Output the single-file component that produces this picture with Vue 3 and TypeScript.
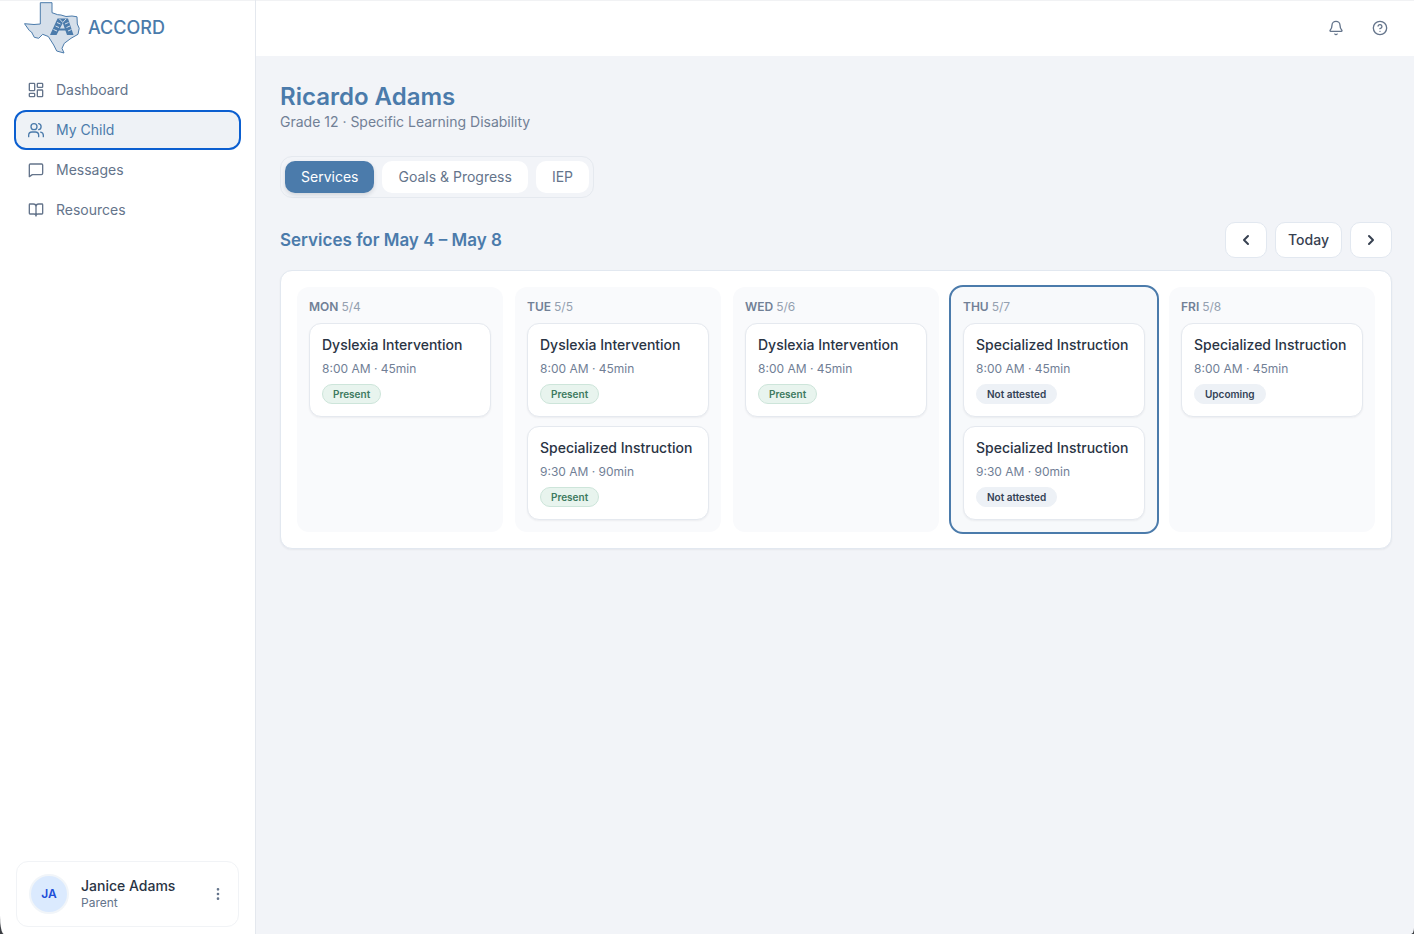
<script setup lang="ts">
import { ref } from 'vue'

interface Session {
  name: string
  time: string
  status: 'Present' | 'Not attested' | 'Upcoming'
}

interface Day {
  label: string
  date: string
  today?: boolean
  sessions: Session[]
}

const navItems = [
  { id: 'dashboard', label: 'Dashboard' },
  { id: 'child', label: 'My Child' },
  { id: 'messages', label: 'Messages' },
  { id: 'resources', label: 'Resources' },
]
const activeNav = ref('child')

const tabs = ['Services', 'Goals & Progress', 'IEP']
const activeTab = ref('Services')

const early = '8:00 AM · 45min'
const late = '9:30 AM · 90min'

const days: Day[] = [
  { label: 'MON', date: '5/4', sessions: [{ name: 'Dyslexia Intervention', time: early, status: 'Present' }] },
  {
    label: 'TUE',
    date: '5/5',
    sessions: [
      { name: 'Dyslexia Intervention', time: early, status: 'Present' },
      { name: 'Specialized Instruction', time: late, status: 'Present' },
    ],
  },
  { label: 'WED', date: '5/6', sessions: [{ name: 'Dyslexia Intervention', time: early, status: 'Present' }] },
  {
    label: 'THU',
    date: '5/7',
    today: true,
    sessions: [
      { name: 'Specialized Instruction', time: early, status: 'Not attested' },
      { name: 'Specialized Instruction', time: late, status: 'Not attested' },
    ],
  },
  { label: 'FRI', date: '5/8', sessions: [{ name: 'Specialized Instruction', time: early, status: 'Upcoming' }] },
]
</script>

<template>
  <div class="app">
    <aside class="sidebar">
      <a class="brand" href="#">
        <svg class="brand-mark" viewBox="0 0 56 53" aria-hidden="true">
          <path
            d="M16.3 1.7H28V11.7L33.7 13.7L37 14L42 15.500L48 15L53 15.800L53.300 23L55.200 27.300L54 33.300L47 37.300L40.300 42.300L38 47.300L40 52L32.700 50L29.700 44L24.300 35.500L18.700 33.300L14.700 37.300L10.300 36.300L7.500 31L5.300 29.500L0.500 22.700L10 23.500L16.300 23Z"
            fill="#d5dfea" stroke="#4b7bab" stroke-width="1" stroke-linejoin="round"
          />
          <path d="M26 34L33.500 17.500H44L49.500 34H43L38.800 22L32.500 34Z" fill="#4b7bab" />
          <path d="M33.500 28.500H42" stroke="#4b7bab" stroke-width="2" />
          <path
            d="M35.500 18L38.800 21.500L42 18M33 21.500L36.500 23M31.500 25L35 26.500M29.500 28.500L33 30M41 23L44.500 21.500M42.500 26.500L46 25M44 30L47.500 28.500"
            fill="none" stroke="#d5dfea" stroke-width="1"
          />
        </svg>
        <span class="brand-name">ACCORD</span>
      </a>

      <nav class="nav" aria-label="Main">
        <a
          v-for="item in navItems"
          :key="item.id"
          href="#"
          class="nav-item"
          :class="{ active: item.id === activeNav }"
          @click.prevent="activeNav = item.id"
        >
          <svg class="icon" viewBox="0 0 24 24" aria-hidden="true">
            <template v-if="item.id === 'dashboard'">
              <rect x="2" y="2" width="8" height="11" rx="1" />
              <rect x="14" y="2" width="8" height="6" rx="1" />
              <rect x="14" y="12" width="8" height="10" rx="1" />
              <rect x="2" y="17" width="8" height="5" rx="1" />
            </template>
            <template v-else-if="item.id === 'child'">
              <path d="M16 22v-2a5 5 0 0 0-5-5H6a5 5 0 0 0-5 5v2" />
              <circle cx="9" cy="7" r="4.5" />
              <path d="M23 22v-2a5 5 0 0 0-4-4.800M16 2.500a4.600 4.600 0 0 1 0 9" />
            </template>
            <path v-else-if="item.id === 'messages'" d="M22 17a2 2 0 0 1-2 2H6.500L2 22V4.500a1.500 1.500 0 0 1 1.500-1.500H20.500a1.500 1.500 0 0 1 1.500 1.500z" />
            <path
              v-else
              d="M12 7v14M3 18a1 1 0 0 1-1-1V4a1 1 0 0 1 1-1h5a4 4 0 0 1 4 4 4 4 0 0 1 4-4h5a1 1 0 0 1 1 1v13a1 1 0 0 1-1 1h-6a3 3 0 0 0-3 3 3 3 0 0 0-3-3z"
            />
          </svg>
          <span>{{ item.label }}</span>
        </a>
      </nav>

      <section class="account">
        <span class="avatar" aria-hidden="true">JA</span>
        <div class="account-text">
          <strong>Janice Adams</strong>
          <span>Parent</span>
        </div>
        <button class="ghost" type="button" aria-label="Account menu">
          <svg class="icon dots" viewBox="0 0 24 24" aria-hidden="true">
            <circle cx="12" cy="12" r="1" />
            <circle cx="12" cy="5" r="1" />
            <circle cx="12" cy="19" r="1" />
          </svg>
        </button>
      </section>
    </aside>

    <div class="body">
      <header class="topbar">
        <button class="ghost" type="button" aria-label="Notifications">
          <svg class="icon" viewBox="0 0 24 24" aria-hidden="true">
            <path d="M10.268 21a2 2 0 0 0 3.464 0M3.262 15.326A1 1 0 0 0 4 17h16a1 1 0 0 0 .740-1.673C19.410 13.956 18 12.499 18 8A6 6 0 0 0 6 8c0 4.499-1.411 5.956-2.738 7.326" />
          </svg>
        </button>
        <button class="ghost" type="button" aria-label="Help">
          <svg class="icon" viewBox="0 0 24 24" aria-hidden="true">
            <circle cx="12" cy="12" r="10" />
            <path d="M9.090 9a3 3 0 0 1 5.830 1c0 2-3 3-3 3M12 17h.010" />
          </svg>
        </button>
      </header>

      <main class="content">
        <h1>Ricardo Adams</h1>
        <p class="subtitle">Grade 12 · Specific Learning Disability</p>

        <div class="tabs" role="tablist">
          <button
            v-for="tab in tabs"
            :key="tab"
            class="tab"
            :class="{ selected: tab === activeTab }"
            type="button"
            role="tab"
            :aria-selected="tab === activeTab"
            @click="activeTab = tab"
          >{{ tab }}</button>
        </div>

        <div class="week-bar">
          <h2>Services for May 4 – May 8</h2>
          <div class="week-nav">
            <button class="outline" type="button" aria-label="Previous week">
              <svg class="chevron" viewBox="0 0 24 24" aria-hidden="true"><path d="m15 18-6-6 6-6" /></svg>
            </button>
            <button class="outline" type="button">Today</button>
            <button class="outline" type="button" aria-label="Next week">
              <svg class="chevron" viewBox="0 0 24 24" aria-hidden="true"><path d="m9 18 6-6-6-6" /></svg>
            </button>
          </div>
        </div>

        <div class="week">
          <section v-for="day in days" :key="day.label" class="day" :class="{ today: day.today }">
            <h3>{{ day.label }} <span>{{ day.date }}</span></h3>
            <article v-for="session in day.sessions" :key="session.time" class="card">
              <h4>{{ session.name }}</h4>
              <p>{{ session.time }}</p>
              <span class="badge" :class="{ present: session.status === 'Present' }">{{ session.status }}</span>
            </article>
          </section>
        </div>
      </main>
    </div>
  </div>
</template>

<style>
body {
  margin: 0;
  background: #f2f4f8;
}
</style>

<style scoped>
.app {
  display: flex;
  min-height: 100vh;
  background: #3a3d42;
  font-family: Inter, Roboto, sans-serif;
  font-size: 14px;
  line-height: 20px;
  color: #2a3444;
}
.app *,
.app {
  box-sizing: border-box;
}
h1, h2, h3, h4, p {
  margin: 0;
}
button {
  font: inherit;
  cursor: pointer;
}
.icon,
.chevron {
  display: block;
  width: 16px;
  height: 16px;
  fill: none;
  stroke: currentColor;
  stroke-width: 2;
  stroke-linecap: round;
  stroke-linejoin: round;
}
.chevron {
  stroke-width: 3;
}
.sidebar {
  display: flex;
  flex-direction: column;
  flex: 0 0 256px;
  background: #fff;
  border-right: 1px solid #e4e8ee;
  border-radius: 0 0 0 4px / 0 0 0 18px;
  box-shadow: inset 0 1px #f1f2f4;
}
.brand {
  display: flex;
  align-items: center;
  gap: 8px;
  height: 55px;
  padding-left: 24px;
  color: #4b7bab;
  text-decoration: none;
}
.brand-mark {
  width: 56px;
  height: 53px;
}
.brand-name {
  font-size: 18px;
  font-weight: 500;
}
.nav {
  display: flex;
  flex-direction: column;
  gap: 4px;
  padding: 17px 16px;
}
.nav-item {
  display: flex;
  align-items: center;
  gap: 12px;
  height: 36px;
  padding: 0 12px;
  border-radius: 10px;
  color: #64748b;
  text-decoration: none;
}
.nav-item.active {
  color: #4b7bab;
  background: #eef2f6;
  outline: 2px solid #0b5fd0;
}
.account {
  display: flex;
  align-items: center;
  gap: 12px;
  height: 66px;
  margin: auto 16px 7px;
  padding: 0 12px;
  border: 1px solid #f1f3f6;
  border-radius: 12px;
}
.avatar {
  display: grid;
  place-items: center;
  width: 40px;
  height: 40px;
  border: 2px solid #f1f5f9;
  border-radius: 50%;
  background: #dbeafe;
  color: #1d4ed8;
  font-size: 12px;
  font-weight: 600;
}
.account-text {
  flex: 1;
}
.account-text strong,
.account-text span {
  display: block;
}
.account-text strong {
  font-weight: 500;
  line-height: 18px;
}
.account-text span {
  color: #64748b;
  font-size: 12px;
  line-height: 16px;
}
.ghost {
  padding: 0;
  border: 0;
  background: none;
  color: #64748b;
}
.body {
  flex: 1;
  min-width: 0;
  background: #f2f4f8;
  border-radius: 0 0 3px 0 / 0 0 6px 0;
}
.topbar {
  display: flex;
  align-items: center;
  justify-content: flex-end;
  gap: 28px;
  height: 56px;
  padding-right: 26px;
  background: #fff;
  box-shadow: inset 0 1px #f1f2f4;
}
.content {
  padding: 25px 22px 24px 24px;
}
h1 {
  color: #4b7bab;
  font-size: 24px;
  line-height: 32px;
  font-weight: 600;
}
.subtitle {
  color: #718096;
  line-height: 18px;
}
.tabs {
  display: flex;
  width: fit-content;
  gap: 8px;
  margin-top: 25px;
  padding: 4px;
  border: 1px solid #e5e9ef;
  border-radius: 12px;
}
.tab {
  height: 32px;
  padding: 0 16px;
  border: 0;
  border-radius: 10px;
  background: #fff;
  color: #64748b;
}
.tab.selected {
  background: #4b7bab;
  color: #fff;
  box-shadow: 0 2px 4px rgba(30, 41, 59, 0.15);
}
.week-bar {
  display: flex;
  align-items: center;
  justify-content: space-between;
  margin: 24px 0 12px;
}
h2 {
  color: #4b7bab;
  font-size: 17px;
  line-height: 24px;
  font-weight: 600;
}
.week-nav {
  display: flex;
  gap: 8px;
}
.outline {
  display: grid;
  place-items: center;
  height: 36px;
  padding: 0 12px;
  border: 1px solid #e2e8f0;
  border-radius: 10px;
  background: #fff;
  color: #374151;
  font-weight: 500;
}
.week {
  display: grid;
  grid-template-columns: repeat(5, 1fr);
  gap: 12px;
  padding: 16px;
  border: 1px solid #e2e8f0;
  border-radius: 12px;
  background: #fff;
  box-shadow: 0 1px 2px rgba(30, 41, 59, 0.06);
}
.day {
  padding: 12px;
  border-radius: 12px;
  background: #f9fafc;
}
.day.today {
  background: #f7f9fb;
  outline: 2px solid #4b7bab;
}
h3 {
  margin-bottom: 8px;
  color: #718096;
  font-size: 12px;
  line-height: 16px;
  font-weight: 600;
}
h3 span {
  color: #94a0b0;
  font-weight: 400;
}
.card {
  padding: 12px;
  border: 1px solid #e5e9ef;
  border-radius: 12px;
  background: #fff;
  box-shadow: 0 1px 2px rgba(30, 41, 59, 0.06);
}
.card + .card {
  margin-top: 9px;
}
h4 {
  font-size: 14px;
  line-height: 18px;
  font-weight: 500;
  white-space: nowrap;
}
.card p {
  margin: 6px 0;
  color: #718096;
  font-size: 12px;
  line-height: 18px;
}
.badge {
  display: block;
  width: fit-content;
  height: 20px;
  padding: 0 10px;
  border: 1px solid #edf1f6;
  border-radius: 10px;
  background: #edf1f6;
  color: #334155;
  font-size: 10px;
  line-height: 18px;
  font-weight: 600;
}
.badge.present {
  border-color: #cde5da;
  background: #e8f4ee;
  color: #3d7a60;
}
</style>
